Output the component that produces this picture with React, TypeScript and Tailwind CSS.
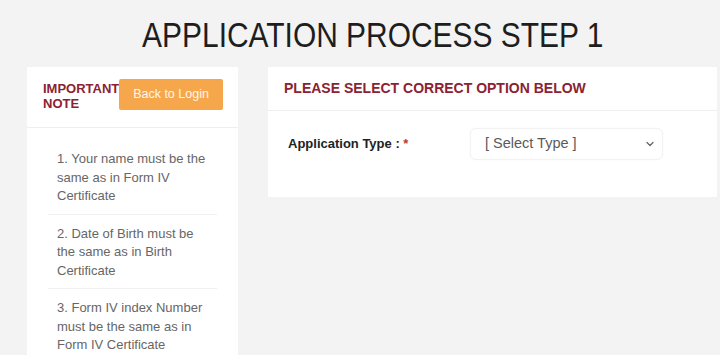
import React from 'react';
import { ChevronDown } from 'lucide-react';

const notes = [
  '1. Your name must be the same as in Form IV Certificate',
  '2. Date of Birth must be the same as in Birth Certificate',
  '3. Form IV index Number must be the same as in Form IV Certificate',
];

export default function App() {
  return (
    <div className="h-[355px] overflow-hidden bg-[#f3f3f3] font-['Liberation_Sans',Arial,sans-serif]">
      <div className="h-[67px] pl-[26px] pt-[14px] text-center">
        {/* heading font in the shot is a condensed Arial, so squeeze it */}
        <h1 className="inline-block scale-x-[0.855] text-[35px] leading-[42px] text-[#1e1e1e]">
          APPLICATION PROCESS STEP 1
        </h1>
      </div>

      <div className="flex items-start gap-[30px] pl-[27px] pr-[3px]">
        {/* Left: important note */}
        <div className="h-[300px] w-[211px] shrink-0 bg-white">
          <div className="flex h-[61px] items-start border-b border-[#eeeeee] pl-[16px] pt-[12px]">
            <div className="w-[76px] whitespace-nowrap pt-[2px] text-[13px] font-bold leading-[15px] text-[#8b2232]">
              IMPORTANT
              <br />
              NOTE
            </div>
            <button className="h-[31px] w-[104px] rounded-[2px] bg-[#f6a64b] text-[12.5px] text-white/90">
              Back to Login
            </button>
          </div>
          <div className="pt-[12px]">
            {notes.map((n, i) => (
              <div key={i} className="mx-[21px] border-b border-[#f0f0f0] pb-[8px] pl-[9px] pr-[4px] pt-[10px]">
                <p className="text-[13px] leading-[18.5px] text-[#666666]">{n}</p>
              </div>
            ))}
          </div>
        </div>

        {/* Right: option select */}
        <div className="flex-1 bg-white">
          <div className="flex h-[44px] items-center border-b border-[#eeeeee] px-[16px]">
            <h2 className="text-[14px] font-bold text-[#8b2232]">PLEASE SELECT CORRECT OPTION BELOW</h2>
          </div>
          <div className="flex items-center pb-[37px] pl-[20px] pt-[17px]">
            <label className="w-[182px] text-[13px] font-bold text-[#222222]">
              Application Type : <span className="text-[#c0392b]">*</span>
            </label>
            <div className="flex h-[32px] w-[193px] items-center justify-between rounded-[6px] border border-[#f2f2f2] bg-white pl-[14px] pr-[6px] text-[14.5px] text-[#5a5a5a] shadow-[0_0_2px_rgba(0,0,0,0.04)]">
              <span>[ Select Type ]</span>
              <ChevronDown className="h-[12px] w-[12px] text-[#666666]" strokeWidth={2.5} />
            </div>
          </div>
        </div>
      </div>
    </div>
  );
}
